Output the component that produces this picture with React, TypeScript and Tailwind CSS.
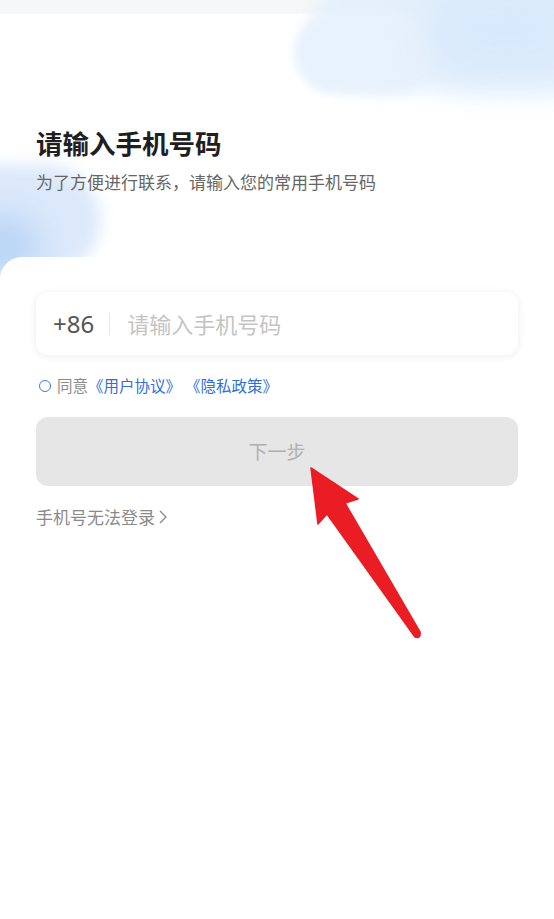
import React from 'react';

const FONT = { fontFamily: '"Noto Sans CJK SC", "Noto Sans", sans-serif' };

/**
 * 背景装饰 - 顶部右侧与左侧的浅蓝色云团
 */
const Clouds = () => (
  <>
    <div className="absolute top-0 left-0 w-full h-[14px] bg-[#f6f7f8]" />
    <div className="absolute -top-[40px] right-[-60px] w-[300px] h-[130px] rounded-full bg-[#e4f0fc] blur-[10px] opacity-90" />
    <div className="absolute top-[12px] left-[294px] w-[140px] h-[82px] rounded-full bg-[#e8f2fc] blur-[4px]" />
    <div className="absolute -top-[20px] right-[-40px] w-[170px] h-[100px] rounded-full bg-[#d8e9fb] blur-[20px]" />
    <div className="absolute top-[165px] -left-[50px] w-[150px] h-[110px] rounded-full bg-[#dbe9fb] blur-[8px]" />
    <div className="absolute top-[215px] -left-[40px] w-[80px] h-[60px] rounded-full bg-[#bcd6f6] blur-[14px]" />
  </>
);

/**
 * 红色指示箭头
 */
const PointerArrow = () => (
  <svg
    className="absolute left-0 top-0 pointer-events-none"
    width="554"
    height="919"
    viewBox="0 0 554 919"
  >
    <path
      d="M311 468 L358 499 L345 503 L420 632 Q421 639 415 637 L327 514 L318 524 Z"
      fill="#ea1c24"
      stroke="#ea1c24"
      strokeWidth="1.5"
      strokeLinejoin="round"
    />
  </svg>
);

export default function App() {
  return (
    <div className="relative w-full h-[919px] overflow-hidden bg-white" style={FONT}>
      <Clouds />

      {/* 标题区 */}
      <div className="relative px-9 pt-[124px] h-[257px]">
        <h1 className="text-[26.5px] leading-[37px] font-bold text-[#1f1f1f]">请输入手机号码</h1>
        <p className="mt-[9px] text-[17px] leading-[24px] text-[#666]">
          为了方便进行联系，请输入您的常用手机号码
        </p>
      </div>

      {/* 表单区 */}
      <div className="relative bg-white rounded-tl-[22px] px-9 pt-[35px]">
        <div className="h-[63px] rounded-[12px] bg-white shadow-[0_1px_8px_rgba(0,0,0,0.08)] flex items-center pl-[17px]">
          <span className="text-[24px] text-[#555]" style={{ fontFamily: '"Noto Sans", sans-serif' }}>
            +86
          </span>
          <span className="ml-[15px] w-px h-[22px] bg-[#e8e8e8]" />
          <span className="ml-[17px] text-[22px] text-[#c4c4c4]">请输入手机号码</span>
        </div>

        <div className="mt-[21px] h-[20px] flex items-center text-[15.5px]">
          <span className="ml-[3px] w-[12px] h-[12px] rounded-full border-[1.5px] border-[#3d7be0]" />
          <span className="ml-[6px] text-[#8a8a8a]">同意</span>
          <span className="text-[#2f6fd6]">《用户协议》</span>
          <span className="ml-[4px] text-[#2f6fd6]">《隐私政策》</span>
        </div>

        <button className="mt-[21px] w-full h-[69px] rounded-[12px] bg-[#e6e6e6] text-[19px] text-[#b0b0b0]">
          下一步
        </button>

        <div className="mt-[19px] flex items-center text-[17px] leading-[24px] text-[#8a8a8a]">
          手机号无法登录
          <svg width="10" height="14" viewBox="0 0 10 14" className="ml-[3px]">
            <path d="M2 1 L8 7 L2 13" fill="none" stroke="#8a8a8a" strokeWidth="1.4" />
          </svg>
        </div>
      </div>

      <PointerArrow />
    </div>
  );
}
